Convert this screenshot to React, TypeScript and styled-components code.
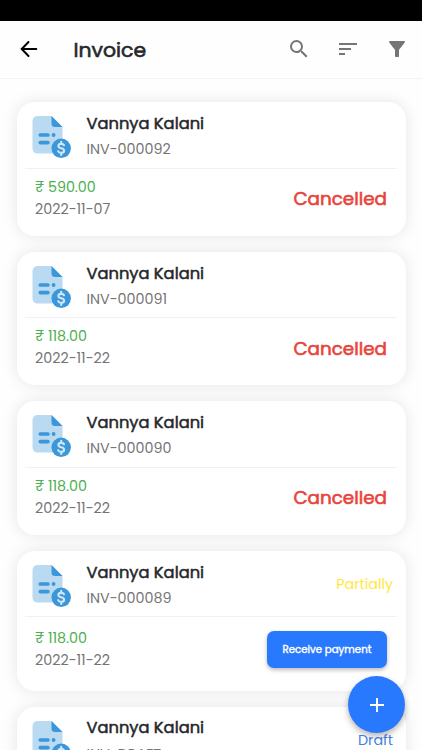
import React from "react";
import styled, { createGlobalStyle } from "styled-components";

const GlobalStyle = createGlobalStyle`
  * { box-sizing: border-box; }
  body { margin: 0; background: #fff; overflow: hidden; }
`;

const Screen = styled.div`
  position: relative;
  height: 750px;
  overflow: hidden;
  background: #fefefe;
  font-family: Poppins, Inter, "Noto Sans", sans-serif;
  color: #25272b;
`;

const StatusBar = styled.div`
  height: 20.5px;
  background: #000;
`;

const Header = styled.header`
  display: flex;
  align-items: center;
  height: 58px;
  padding: 0 13px 0 17px;
  border-bottom: 1.5px solid #f3f3f3;
`;

const Title = styled.h1`
  flex: 1;
  margin: 0 0 0 32.5px;
  padding-top: 1px;
  font-size: 20.4px;
  line-height: 30px;
  font-weight: 400;
  -webkit-text-stroke: 0.6px currentColor;
`;

const Actions = styled.div`
  display: flex;
  gap: 25px;
`;

const IconButton = styled.button`
  display: flex;
  padding: 0;
  border: 0;
  background: none;
  color: #757575;
`;

const List = styled.main`
  display: flex;
  flex-direction: column;
  gap: 16px;
  padding: 23.7px 16.5px 0 16.5px;
`;

const Card = styled.article<{ $tall?: boolean }>`
  flex: none;
  height: ${(p) => (p.$tall ? 139.7 : 133.6)}px;
  padding: 0 8.5px;
  border-radius: 18px;
  background: #fff;
  box-shadow: 0 0 16px rgba(0, 0, 0, 0.1);
`;

const CardTop = styled.div`
  display: flex;
  height: 66.5px;
  padding: 12px 4px 0 5.5px;
  border-bottom: 1px solid #f1f1f1;
`;

const Customer = styled.div`
  flex: 1;
  margin-left: 14px;
`;

const Name = styled.div`
  margin-top: -2.2px;
  font-size: 16.3px;
  line-height: 24px;
  font-weight: 400;
  -webkit-text-stroke: 0.5px currentColor;
  white-space: nowrap;
`;

const Muted = styled.div<{ $gap?: number }>`
  margin-top: ${(p) => p.$gap ?? 0}px;
  font-size: 14.3px;
  line-height: 22px;
  color: #757575;
`;

const Tag = styled.div<{ $color: string }>`
  margin-top: 10px;
  font-size: 14.3px;
  line-height: 22px;
  color: ${(p) => p.$color};
`;

const CardBottom = styled.div<{ $tall?: boolean }>`
  display: flex;
  justify-content: space-between;
  padding: ${(p) => (p.$tall ? 10.8 : 8)}px 10px 0 10px;
`;

const Amount = styled.div`
  font-size: 14.3px;
  line-height: 21px;
  color: #4caf50;
`;

const Cancelled = styled.div`
  margin-top: 7.3px;
  font-size: 18.35px;
  line-height: 30px;
  -webkit-text-stroke: 0.6px currentColor;
  color: #e8443a;
`;

const PayButton = styled.button`
  width: 120px;
  height: 36.5px;
  margin-top: 3.2px;
  padding: 0;
  border: 0;
  border-radius: 7px;
  background: #2979ff;
  box-shadow: 0 2px 4px rgba(0, 0, 0, 0.28);
  color: #fff;
  font: 400 10.2px/37px Poppins, Inter, sans-serif;
  -webkit-text-stroke: 0.4px currentColor;
  white-space: nowrap;
`;

const AddButton = styled.button`
  position: absolute;
  right: 17px;
  bottom: 17px;
  display: flex;
  align-items: center;
  justify-content: center;
  width: 57px;
  height: 57px;
  padding: 0;
  border: 0;
  border-radius: 50%;
  background: #2979ff;
  box-shadow: 0 3px 6px rgba(0, 0, 0, 0.3);
  color: #fff;
`;

const InvoiceIcon = () => (
  <svg width="42" height="44" viewBox="0 0 42 44">
    <path d="M7 2H20.5L31.5 13V39.5H7Q1.5 39.5 1.5 34V7.5Q1.5 2 7 2Z" fill="#b9daf1" />
    <path d="M20.5 2L31.5 13H24Q20.5 13 20.5 9.5Z" fill="#3b97da" />
    <path d="M9.3 21h7.6M9.3 28.6h7.6" stroke="#3b97da" strokeWidth="3.7" strokeLinecap="round" />
    <circle cx="22.6" cy="21" r="1.9" fill="#3b97da" />
    <circle cx="30.2" cy="34.3" r="9.7" fill="#3b97da" />
    <path
      d="M33 31.2Q32.4 29.9 30.2 29.9Q27.4 29.9 27.4 32Q27.4 33.7 30.2 34.3Q33.1 34.9 33.1 36.7Q33.1 38.8 30.2 38.8Q27.7 38.8 27.2 37.2M30.2 27.7v2.2M30.2 38.8v2.2"
      fill="none"
      stroke="#cfe7f7"
      strokeWidth="2.1"
      strokeLinecap="round"
    />
  </svg>
);

type Invoice = {
  number: string;
  amount: string;
  date: string;
  status: "Cancelled" | "Partially" | "Draft";
};

const invoices: Invoice[] = [
  { number: "INV-000092", amount: "590.00", date: "2022-11-07", status: "Cancelled" },
  { number: "INV-000091", amount: "118.00", date: "2022-11-22", status: "Cancelled" },
  { number: "INV-000090", amount: "118.00", date: "2022-11-22", status: "Cancelled" },
  { number: "INV-000089", amount: "118.00", date: "2022-11-22", status: "Partially" },
  { number: "INV-DRAFT", amount: "118.00", date: "2022-11-22", status: "Draft" },
];

const InvoiceCard = ({ invoice }: { invoice: Invoice }) => {
  const open = invoice.status !== "Cancelled";
  return (
    <Card $tall={open}>
      <CardTop>
        <InvoiceIcon />
        <Customer>
          <Name>Vannya Kalani</Name>
          <Muted $gap={2.2}>{invoice.number}</Muted>
        </Customer>
        {open && (
          <Tag $color={invoice.status === "Draft" ? "#4580e0" : "#ffe83b"}>{invoice.status}</Tag>
        )}
      </CardTop>
      {invoice.status !== "Draft" && (
        <CardBottom $tall={open}>
          <div>
            <Amount>₹ {invoice.amount}</Amount>
            <Muted>{invoice.date}</Muted>
          </div>
          {open ? <PayButton>Receive payment</PayButton> : <Cancelled>Cancelled</Cancelled>}
        </CardBottom>
      )}
    </Card>
  );
};

export default function App() {
  return (
    <Screen>
      <GlobalStyle />
      <StatusBar />
      <Header>
        <IconButton aria-label="Back">
          <svg width="24" height="24" viewBox="0 0 24 24" fill="none" stroke="#000" strokeWidth="2" strokeLinecap="round">
            <path d="M19.3 12H5M11.5 5L4.7 12L11.5 19" />
          </svg>
        </IconButton>
        <Title>Invoice</Title>
        <Actions>
          <IconButton aria-label="Search">
            <svg width="24" height="24" viewBox="0 0 24 24" fill="currentColor">
              <path d="M15.5 14h-.79l-.28-.27A6.47 6.47 0 0 0 16 9.5 6.5 6.5 0 1 0 9.5 16c1.61 0 3.09-.59 4.23-1.57l.27.28v.79l5 4.99L20.49 19l-4.99-5zm-6 0a4.5 4.5 0 1 1 0-9 4.5 4.5 0 0 1 0 9z" />
            </svg>
          </IconButton>
          <IconButton aria-label="Sort">
            <svg width="24" height="24" viewBox="0 0 24 24" fill="currentColor">
              <path d="M3 18h6v-2H3v2zM3 6v2h18V6H3zm0 7h12v-2H3v2z" />
            </svg>
          </IconButton>
          <IconButton aria-label="Filter">
            <svg width="24" height="24" viewBox="0 0 24 24" fill="currentColor">
              <path d="M4.25 5.61C6.27 8.2 10 13 10 13v6c0 .55.45 1 1 1h2c.55 0 1-.45 1-1v-6s3.72-4.8 5.74-7.39A.998.998 0 0 0 18.95 4H5.04c-.83 0-1.3.95-.79 1.61z" />
            </svg>
          </IconButton>
        </Actions>
      </Header>
      <List>
        {invoices.map((invoice) => (
          <InvoiceCard key={invoice.number} invoice={invoice} />
        ))}
      </List>
      <AddButton aria-label="Add invoice">
        <svg width="24" height="24" viewBox="0 0 24 24" stroke="currentColor" strokeWidth="1.9">
          <path d="M12 5v14M5 12h14" />
        </svg>
      </AddButton>
    </Screen>
  );
}
